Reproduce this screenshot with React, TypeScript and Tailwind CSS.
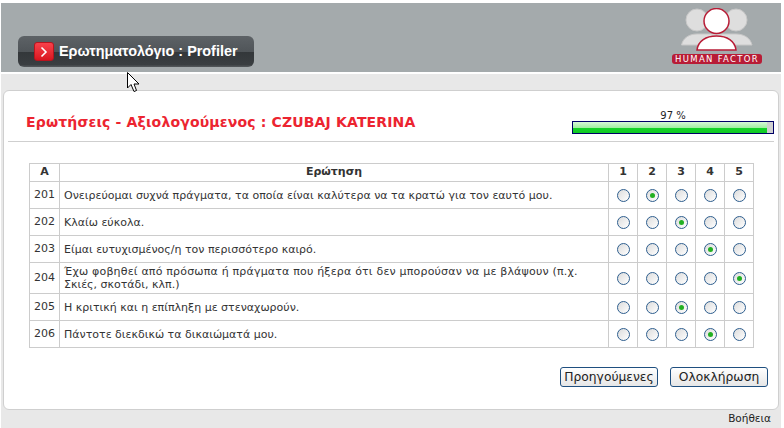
const questions = [
  { id: 201, text: <>Ονειρεύομαι συχνά πράγματα, τα οποία είναι καλύτερα να τα κρατώ για τον εαυτό μου.</>, answer: 2, h: 'h-[27px]' },
  { id: 202, text: <>Κλαίω εύκολα.</>, answer: 3, h: 'h-[27px]' },
  { id: 203, text: <>Είμαι ευτυχισμένος/η τον περισσότερο καιρό.</>, answer: 4, h: 'h-[27px]' },
  { id: 204, text: <><span className="tracking-[0.19px]">Έχω φοβηθεί από πρόσωπα ή πράγματα που ήξερα ότι δεν μπορούσαν να με βλάψουν (π.χ.</span><br />Σκιές, σκοτάδι, κλπ.)</>, answer: 5, h: 'h-[31px]' },
  { id: 205, text: <>Η κριτική και η επίπληξη με στεναχωρούν.</>, answer: 3, h: 'h-[27px]' },
  { id: 206, text: <>Πάντοτε διεκδικώ τα δικαιώματά μου.</>, answer: 4, h: 'h-[27px]' },
];

const options = [1, 2, 3, 4, 5];

function Radio({ checked }: { checked: boolean }) {
  return (
    <span className="mx-auto flex h-[13px] w-[13px] items-center justify-center rounded-full border border-[#2f5f8f] bg-gradient-to-br from-[#dcdcdc] to-white">
      {checked && <span className="h-[5px] w-[5px] rounded-full bg-[#22b022]" />}
    </span>
  );
}

function Logo() {
  return (
    <div className="flex w-[90px] flex-col items-center">
      <svg width="72" height="43" viewBox="0 0 72 43" className="mb-[3px]">
        <circle cx="16" cy="12" r="11" fill="#dedede" stroke="#c8c8c8" />
        <circle cx="55" cy="12" r="11" fill="#dedede" stroke="#c8c8c8" />
        <path d="M0.5 37 C2 30 8 26 16 26 L55 26 C63 26 69.5 30 71 37 Z" fill="#dedede" stroke="#c8c8c8" />
        <path d="M16 42 C17 33 25 28 35.5 28 C46 28 54 33 55 42 Z" fill="#fff" stroke="#b81c36" strokeWidth="1.5" />
        <circle cx="35.5" cy="13" r="12.5" fill="#fff" stroke="#b81c36" strokeWidth="1.5" />
      </svg>
      <div className="flex h-[10px] w-[90px] items-center justify-center rounded-[3px] bg-[#b81c36] text-[8.5px] leading-none tracking-[1.3px] whitespace-nowrap text-white">
        HUMAN FACTOR
      </div>
    </div>
  );
}

export default function App() {
  return (
    <div className="relative flex h-[428px] w-[784px] flex-col overflow-hidden bg-white pt-[3px] pl-px pr-[3px] font-['DejaVu_Sans',sans-serif] text-[11px] text-[#333]">
      {/* ヘッダー */}
      <div className="flex h-[69px] shrink-0 items-end justify-between bg-[#a4aaac] pl-[17px] pr-[19px]">
        <div className="mb-[5px] flex h-[31px] w-[236px] items-center rounded-[6px] bg-[linear-gradient(#5d6266_0%,#505559_50%,#33373a_52%,#3a3e41_92%,#55595c_100%)] pl-4">
          <span className="flex h-[19px] w-[20px] items-center justify-center rounded-[3px] border border-[#b9141e] bg-gradient-to-b from-[#f8404a] to-[#d9141f]">
            <svg width="8" height="12" viewBox="0 0 8 12" fill="none" stroke="#fff" strokeWidth="1.6">
              <path d="M1.5 1.5 L6 6 L1.5 10.5" />
            </svg>
          </span>
          <span className="ml-[5px] text-[14.4px] font-bold whitespace-nowrap text-white [font-family:'Liberation_Sans',sans-serif]">
            Ερωτηματολόγιο : Profiler
          </span>
        </div>
        <div className="mb-[8px]">
          <Logo />
        </div>
      </div>

      <div className="mt-[2px] flex min-h-0 flex-1 flex-col bg-[#e8e8e8] pl-[2px] pr-[2px] pt-4">
        {/* カード */}
        <div className="flex h-[320px] shrink-0 flex-col rounded-[6px] border border-[#cfcfcf] bg-white px-[4px]">
          <div className="flex h-[51px] shrink-0 items-end justify-between border-b border-[#cfcfcf] pb-[7px] pl-[18px]">
            <h1 className="mb-[2px] text-[14px] leading-[20px] font-bold tracking-[0.16px] text-[#ec2430]">
              Ερωτήσεις - Αξιολογούμενος : CZUBAJ KATERINA
            </h1>
            <div className="flex w-[202px] flex-col items-center">
              <span className="text-[10px] leading-[11px] text-[#222]">97 %</span>
              <div className="h-[13px] w-full border border-[#000066] bg-[#d0d0d0]">
                <div className="h-full w-[97%] bg-[linear-gradient(#d8f8d8_0%,#9ff09f_55%,#16d42a_58%,#10c824_100%)]" />
              </div>
            </div>
          </div>

          <table className="mt-[21px] ml-[21px] w-[725px] table-fixed border-collapse border border-[#cccccc]">
            <colgroup>
              <col className="w-[30px]" />
              <col />
              <col className="w-[29px]" />
              <col className="w-[29px]" />
              <col className="w-[29px]" />
              <col className="w-[29px]" />
              <col className="w-[29px]" />
            </colgroup>
            <thead>
              <tr className="h-[18px]">
                <th className="border border-[#cccccc] p-0 font-bold">A</th>
                <th className="border border-[#cccccc] p-0 font-bold">Ερώτηση</th>
                {options.map((o) => (
                  <th key={o} className="border border-[#cccccc] p-0 font-bold">{o}</th>
                ))}
              </tr>
            </thead>
            <tbody>
              {questions.map((q) => (
                <tr key={q.id} className={q.h}>
                  <td className="border border-[#cccccc] p-0 text-center">{q.id}</td>
                  <td className="border border-[#cccccc] py-0 pr-1 pl-[4px] leading-[13px]">{q.text}</td>
                  {options.map((o) => (
                    <td key={o} className="border border-[#cccccc] p-0">
                      <Radio checked={q.answer === o} />
                    </td>
                  ))}
                </tr>
              ))}
            </tbody>
          </table>

          <div className="mt-[19px] flex justify-end gap-[12px] pr-[6px]">
            <button className="h-[20px] w-[98px] rounded-[3px] border border-[#1f4f7f] bg-gradient-to-b from-white to-[#e6e6e6] text-[12.3px] leading-none whitespace-nowrap text-[#222]">
              Προηγούμενες
            </button>
            <button className="h-[20px] w-[98px] rounded-[3px] border border-[#1f4f7f] bg-gradient-to-b from-white to-[#e6e6e6] text-[12.3px] leading-none whitespace-nowrap text-[#222]">
              Ολοκλήρωση
            </button>
          </div>
        </div>

        <div className="flex justify-end pt-px pr-[8px] text-[10.5px] leading-[14px] text-[#222]">Βοήθεια</div>
      </div>

      {/* カーソル */}
      <svg className="absolute top-[72px] left-[127px]" width="13" height="21" viewBox="0 0 13 21">
        <path d="M0.5 0.5 V16 L4 12.5 L7 19.5 L9.5 18.5 L7 12 H12 Z" fill="#fff" stroke="#000" strokeWidth="1" />
      </svg>
    </div>
  );
}
